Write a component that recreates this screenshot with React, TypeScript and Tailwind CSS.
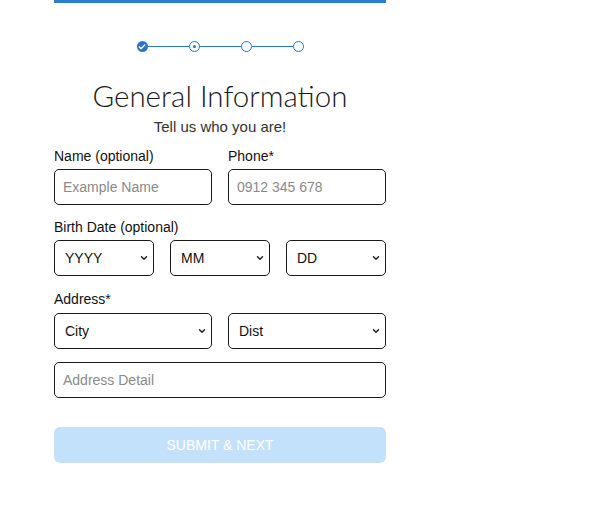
import { Check } from "lucide-react";

const font = { fontFamily: '"Liberation Sans", Arial, sans-serif' };

function Chevron() {
  return (
    <svg className="pointer-events-none absolute right-[6px] top-1/2 -translate-y-1/2" width="8" height="6" viewBox="0 0 8 6">
      <path d="M1.5 1.8 L4 4.3 L6.5 1.8" fill="none" stroke="#222" strokeWidth="1.5" strokeLinecap="round" />
    </svg>
  );
}

function Select({ label }: { label: string }) {
  return (
    <div className="relative flex-1">
      <div className="flex h-[36px] items-center rounded-[5px] border-[1.5px] border-[#1a1a1a] pl-[10px] text-[14px] text-[#111]">
        {label}
      </div>
      <Chevron />
    </div>
  );
}

function Input({ placeholder }: { placeholder: string }) {
  return (
    <div className="flex h-[36px] flex-1 items-center rounded-[5px] border-[1.5px] border-[#1a1a1a] pl-[8px] text-[14px] text-[#8a8a8a]">
      {placeholder}
    </div>
  );
}

function Stepper() {
  return (
    <div className="flex h-[11px] items-center justify-center">
      <div className="flex h-[11px] w-[11px] items-center justify-center rounded-full bg-[#2f74c0]">
        <Check className="h-[8px] w-[8px] text-white" strokeWidth={4} />
      </div>
      <div className="h-[1.5px] w-[41px] bg-[#2f74c0]" />
      <div className="flex h-[11px] w-[11px] items-center justify-center rounded-full border-[1.5px] border-[#2f74c0] bg-white">
        <div className="h-[3px] w-[3px] rounded-full bg-[#2f74c0]" />
      </div>
      <div className="h-[1.5px] w-[41px] bg-[#2f74c0]" />
      <div className="h-[11px] w-[11px] rounded-full border-[1.5px] border-[#2f74c0] bg-white" />
      <div className="h-[1.5px] w-[41px] bg-[#2f74c0]" />
      <div className="h-[11px] w-[11px] rounded-full border-[1.5px] border-[#2f74c0] bg-white" />
    </div>
  );
}

export default function App() {
  return (
    <div className="h-[514px] w-[600px] bg-white" style={font}>
      <div className="ml-[54px] w-[332px]">
        <div className="h-[3px] bg-[#2f7bd4]" />
        <div className="mt-[38px]">
          <Stepper />
        </div>
        <h1
          className="mt-[26px] text-center text-[29.5px] font-light leading-[36px] text-[#1a1a1a]"
          style={{ fontFamily: 'Lato, "Liberation Sans", sans-serif' }}
        >
          General Information
        </h1>
        <p className="mt-[3px] text-center text-[15px] leading-[20px] text-[#333]">Tell us who you are!</p>

        <div className="mt-[9px] flex gap-[16px]">
          <div className="flex flex-1 flex-col">
            <label className="text-[14px] leading-[20px] text-[#111]">Name (optional)</label>
            <div className="mt-[3px] flex">
              <Input placeholder="Example Name" />
            </div>
          </div>
          <div className="flex flex-1 flex-col">
            <label className="text-[14px] leading-[20px] text-[#111]">Phone*</label>
            <div className="mt-[3px] flex">
              <Input placeholder="0912 345 678" />
            </div>
          </div>
        </div>

        <label className="mt-[12px] block text-[14px] leading-[20px] text-[#111]">Birth Date (optional)</label>
        <div className="mt-[3px] flex gap-[16px]">
          <Select label="YYYY" />
          <Select label="MM" />
          <Select label="DD" />
        </div>

        <label className="mt-[13px] block text-[14px] leading-[20px] text-[#111]">Address*</label>
        <div className="mt-[4px] flex gap-[16px]">
          <Select label="City" />
          <Select label="Dist" />
        </div>
        <div className="mt-[13px] flex">
          <Input placeholder="Address Detail" />
        </div>

        <button className="mt-[29px] flex h-[36px] w-full items-center justify-center rounded-[6px] bg-[#c3e1fb] text-[14px] text-white">
          SUBMIT &amp; NEXT
        </button>
      </div>
    </div>
  );
}
